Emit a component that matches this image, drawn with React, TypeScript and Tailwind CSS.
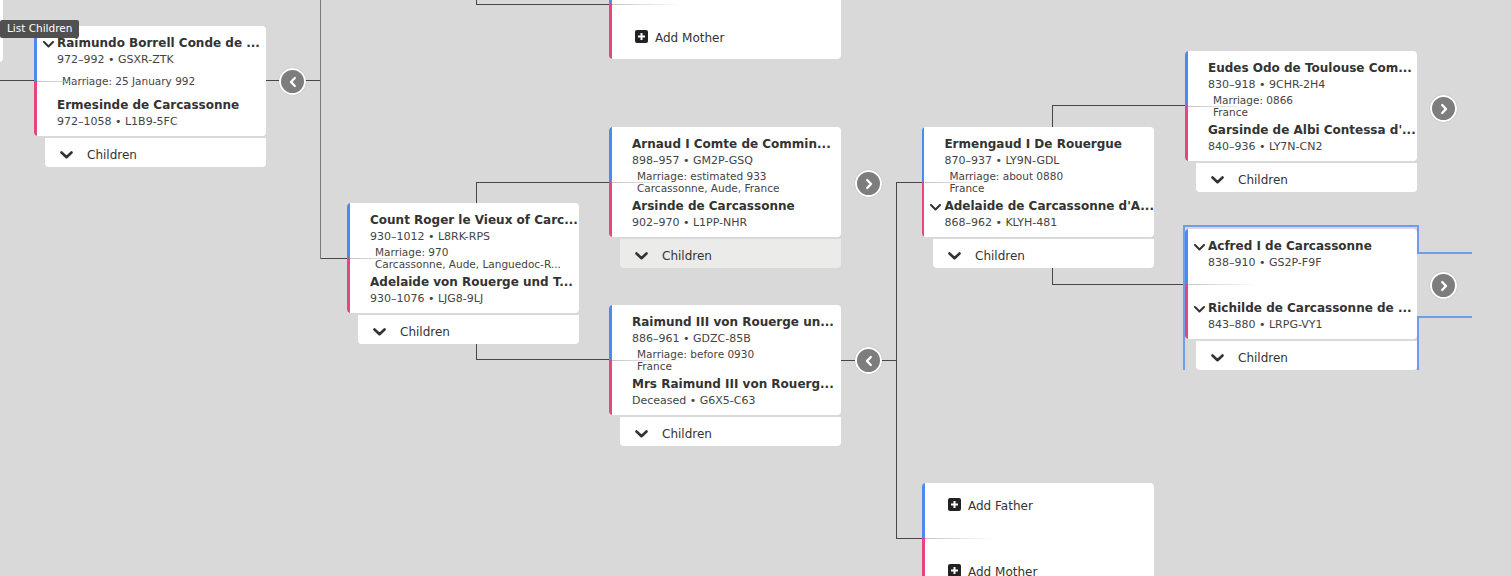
import React from "react";

type Person = { name: string; info: string; chevron?: boolean };
type CoupleData = {
  pos: string;
  father: Person;
  mother: Person;
  marriage?: string[];
  bar?: "white" | "hover";
};

const couples: CoupleData[] = [
  {
    pos: "left-[34px] top-[26px]",
    father: { name: "Raimundo Borrell Conde de ...", info: "972–992 • GSXR-ZTK", chevron: true },
    marriage: ["Marriage: 25 January 992"],
    mother: { name: "Ermesinde de Carcassonne", info: "972–1058 • L1B9-5FC" },
    bar: "white",
  },
  {
    pos: "left-[347px] top-[203px]",
    father: { name: "Count Roger le Vieux of Carc...", info: "930–1012 • L8RK-RPS" },
    marriage: ["Marriage: 970", "Carcassonne, Aude, Languedoc-R..."],
    mother: { name: "Adelaide von Rouerge und T...", info: "930–1076 • LJG8-9LJ" },
    bar: "white",
  },
  {
    pos: "left-[609px] top-[127px]",
    father: { name: "Arnaud I Comte de Commin...", info: "898–957 • GM2P-GSQ" },
    marriage: ["Marriage: estimated 933", "Carcassonne, Aude, France"],
    mother: { name: "Arsinde de Carcassonne", info: "902–970 • L1PP-NHR" },
    bar: "hover",
  },
  {
    pos: "left-[609px] top-[305px]",
    father: { name: "Raimund III von Rouerge un...", info: "886–961 • GDZC-85B" },
    marriage: ["Marriage: before 0930", "France"],
    mother: { name: "Mrs Raimund III von Rouerg...", info: "Deceased • G6X5-C63" },
    bar: "white",
  },
  {
    pos: "left-[922px] top-[127px]",
    father: { name: "Ermengaud I De Rouergue", info: "870–937 • LY9N-GDL" },
    marriage: ["Marriage: about 0880", "France"],
    mother: { name: "Adelaide de Carcassonne d'A...", info: "868–962 • KLYH-481", chevron: true },
    bar: "white",
  },
  {
    pos: "left-[1185px] top-[51px]",
    father: { name: "Eudes Odo de Toulouse Com...", info: "830–918 • 9CHR-2H4" },
    marriage: ["Marriage: 0866", "France"],
    mother: { name: "Garsinde de Albi Contessa d'...", info: "840–936 • LY7N-CN2" },
    bar: "white",
  },
  {
    pos: "left-[1185px] top-[229px]",
    father: { name: "Acfred I de Carcassonne", info: "838–910 • GS2P-F9F", chevron: true },
    mother: { name: "Richilde de Carcassonne de ...", info: "843–880 • LRPG-VY1", chevron: true },
    bar: "white",
  },
];

const navs = [
  { pos: "left-[279px] top-[68px]", dir: "left" },
  { pos: "left-[855px] top-[170px]", dir: "right" },
  { pos: "left-[855px] top-[347px]", dir: "left" },
  { pos: "left-[1430px] top-[95px]", dir: "right" },
  { pos: "left-[1430px] top-[272px]", dir: "right" },
];

function SmallChevron({ className }: { className?: string }) {
  return (
    <svg width="11" height="7" viewBox="0 0 11 7" className={className}>
      <path d="M1 1 L5.5 5.5 L10 1" fill="none" stroke="#333" strokeWidth="2" strokeLinecap="round" strokeLinejoin="round" />
    </svg>
  );
}

function PlusSquare() {
  return (
    <svg width="13" height="13" viewBox="0 0 13 13" className="shrink-0">
      <rect x="0" y="0" width="13" height="13" rx="2" fill="#222" />
      <path d="M6.5 3 V10 M3 6.5 H10" stroke="#fff" strokeWidth="2" />
    </svg>
  );
}

function ColourStrip() {
  return (
    <div className="flex w-[3px] flex-col">
      <div className="flex-1 bg-[#4d8af0]" />
      <div className="flex-1 bg-[#e2487c]" />
    </div>
  );
}

function Divider() {
  return <div className="absolute left-[3px] top-[55px] h-px w-[70px] bg-linear-to-r from-[#c4c4c4] to-transparent" />;
}

function PersonRow({ p }: { p: Person }) {
  return (
    <div className="relative">
      {p.chevron && <SmallChevron className="absolute -left-[14px] top-[6px]" />}
      <div className="h-[17px] whitespace-nowrap text-[12px] font-bold leading-[17px] text-[#333]">{p.name}</div>
      <div className="mt-px h-[14px] whitespace-nowrap text-[11px] leading-[14px] text-[#444]">{p.info}</div>
    </div>
  );
}

function Couple({ c }: { c: CoupleData }) {
  return (
    <div className={`absolute w-[232px] ${c.pos}`}>
      <div className="relative flex h-[110px] overflow-hidden rounded-[4px] bg-white">
        <ColourStrip />
        <div className="flex flex-1 flex-col pl-[20px] pt-[9px]">
          <PersonRow p={c.father} />
          <div className="flex h-[30px] flex-col justify-center pb-[3px] pl-[5px] text-[10.5px] leading-[12px] text-[#444]">
            {c.marriage?.map((m) => (
              <div key={m} className="whitespace-nowrap">{m}</div>
            ))}
          </div>
          <PersonRow p={c.mother} />
        </div>
        <Divider />
      </div>
      {c.bar && (
        <div
          className={`ml-[11px] mt-[2px] flex h-[29px] items-center rounded-b-[4px] pl-[15px] pt-[4px] text-[12px] text-[#333] ${
            c.bar === "hover" ? "bg-[#ebebea]" : "bg-white"
          }`}
        >
          <svg width="13" height="8" viewBox="0 0 13 8">
            <path d="M1.5 1.5 L6.5 6.2 L11.5 1.5" fill="none" stroke="#333" strokeWidth="2.6" strokeLinecap="round" strokeLinejoin="round" />
          </svg>
          <span className="ml-[14px]">Children</span>
        </div>
      )}
    </div>
  );
}

function AddCard({ pos, father = true }: { pos: string; father?: boolean }) {
  return (
    <div className={`absolute w-[232px] ${pos}`}>
      <div className="relative flex h-[110px] overflow-hidden rounded-[4px] bg-white text-[12px] text-[#333]">
        <ColourStrip />
        <div className="flex flex-1 flex-col pl-[23px]">
          <div className="flex h-[55px] items-start gap-[7px] pt-[15px] leading-[16px]">
            {father && (
              <>
                <PlusSquare />
                <span>Add Father</span>
              </>
            )}
          </div>
          <div className="flex h-[55px] items-start gap-[7px] pt-[26px] leading-[16px]">
            <PlusSquare />
            <span>Add Mother</span>
          </div>
        </div>
        <Divider />
      </div>
    </div>
  );
}

function NavButton({ pos, dir }: { pos: string; dir: string }) {
  return (
    <div
      className={`absolute flex h-[27px] w-[27px] items-center justify-center rounded-full border-2 border-white bg-[#7d7d7d] shadow-[0_0_1px_rgba(0,0,0,0.3)] ${pos}`}
    >
      <svg width="10" height="12" viewBox="0 0 10 12">
        <path
          d={dir === "left" ? "M6.8 2 L3 6 L6.8 10" : "M3.2 2 L7 6 L3.2 10"}
          fill="none"
          stroke="#fff"
          strokeWidth="2.4"
          strokeLinecap="round"
          strokeLinejoin="round"
        />
      </svg>
    </div>
  );
}

export default function App() {
  return (
    <div className="relative h-[576px] w-[1511px] overflow-hidden bg-[#d9d9d9] font-['DejaVu_Sans',Verdana,sans-serif]">
      {/* connector lines */}
      <svg className="absolute inset-0" width="1511" height="576" shapeRendering="crispEdges">
        <g stroke="#474747" strokeWidth="1" fill="none">
          <path d="M0 80.5 H34" />
          <path d="M265 80.5 H320" />
          <path d="M320.5 258.5 H347" />
          <path d="M476.5 0 V4.5 H609" />
          <path d="M476.5 203 V182.5 H609" />
          <path d="M476.5 344 V359.5 H609" />
          <path d="M841 360.5 H896.5" />
          <path d="M922 182.5 H896.5 V538.5 H922" />
          <path d="M1052.5 127 V105.5 H1185" />
          <path d="M1052.5 267 V284.5 H1185" />
        </g>
        <path d="M320.5 0 V258.5" stroke="#7a7a7a" strokeWidth="1" />
      </svg>

      {/* partial card at left edge */}
      <div className="absolute left-[-229px] top-[-48px] h-[110px] w-[232px] rounded-[4px] bg-white" />

      <AddCard pos="left-[609px] top-[-51px]" father={false} />
      <AddCard pos="left-[922px] top-[483px]" />

      {couples.map((c) => (
        <Couple key={c.pos} c={c} />
      ))}

      {/* selection outline */}
      <svg className="pointer-events-none absolute inset-0" width="1511" height="576">
        <g stroke="#6d9eeb" strokeWidth="2" fill="none">
          <path d="M1184 370 V226 H1418 V253 H1472" />
          <path d="M1472 317 H1418 V370" />
        </g>
      </svg>

      {navs.map((n) => (
        <NavButton key={n.pos} pos={n.pos} dir={n.dir} />
      ))}

      <div className="absolute left-0 top-[20px] flex h-[18px] items-center rounded-[2px] bg-[#505050] px-[7px] text-[10.5px] text-white">
        List Children
      </div>
    </div>
  );
}
